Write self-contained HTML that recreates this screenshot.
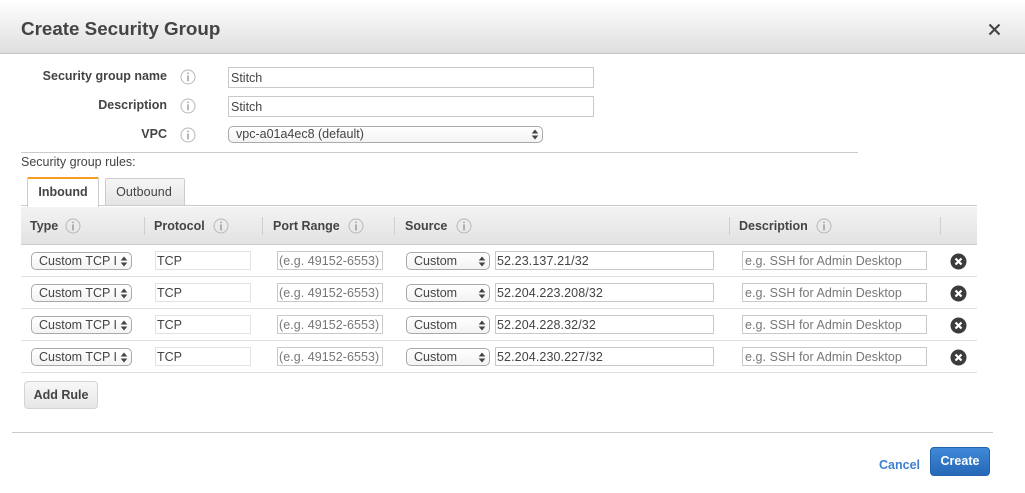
<!DOCTYPE html>
<html>
<head>
<meta charset="utf-8">
<style>
html,body{margin:0;padding:0;background:#fff}
body{width:1025px;height:493px;position:relative;overflow:hidden;font-family:"Liberation Sans",sans-serif;color:#444;font-size:12.5px;filter:blur(.3px)}
.a{position:absolute;white-space:nowrap}
.head{left:0;top:0;width:1025px;height:53px;background:linear-gradient(#fff,#dedede);border-bottom:1px solid #c6c6c6}
.title{left:21px;top:17px;font-size:18.8px;line-height:24px;font-weight:bold;color:#444}
.lab{width:146px;left:21px;text-align:right;font-weight:bold;font-size:12.5px;line-height:16px;color:#444}
.inp{box-sizing:border-box;border:1px solid #c9c9c9;background:#fff;font-size:12.5px;line-height:18px;padding-left:1px;color:#444;overflow:hidden}
.ip{letter-spacing:.1px}
.ph{color:#777;letter-spacing:.05px}
.lt{border-color:#e2e2e2}
.sel{box-sizing:border-box;height:18px;border:1px solid #aaa;border-radius:5px;background:linear-gradient(#fff,#f3f3f3);font-size:12.5px;line-height:16px;padding-left:7px;color:#444;overflow:hidden}
.sel svg{position:absolute;right:3px;top:3px}
.hr{height:1px;background:#cbcbcb}
.rl{left:21px;width:956px;height:1px;background:#dedede}
.th{font-weight:bold;font-size:12.5px;line-height:16px;color:#444;top:218px}
.dv{width:1px;height:18px;top:217px;background:#d0d0d0}
</style>
</head>
<body>
<div class="a head"></div>
<div class="a title">Create Security Group</div>
<svg class="a" style="left:988px;top:23px" width="13" height="13" viewBox="0 0 13 13"><path d="M1.5 1.5L11.5 11.5M11.5 1.5L1.5 11.5" stroke="#444" stroke-width="2.1" fill="none"/></svg>

<div class="a lab" style="top:68px">Security group name</div>
<div class="a lab" style="top:97px">Description</div>
<div class="a lab" style="top:126px">VPC</div>

<svg width="0" height="0" style="position:absolute"><defs>
<g id="i"><circle cx="8" cy="8" r="7" fill="none" stroke="#b8b8b8" stroke-width="1"/><rect x="7.4" y="6.4" width="1.2" height="6" fill="#888"/><rect x="7.4" y="3.6" width="1.2" height="1.5" fill="#888"/></g>
<g id="ar"><path d="M4 0.5L7.3 4.5H0.7Z M0.7 6.5H7.3L4 10.5Z" fill="#444"/></g>
<g id="x"><circle cx="8.5" cy="8.5" r="8" fill="#3c3c3c"/><path d="M5.5 5.5L11.5 11.5M11.5 5.5L5.5 11.5" stroke="#fff" stroke-width="2.2"/></g>
</defs></svg>

<svg class="a" style="left:180px;top:69px" width="16" height="16"><use href="#i"/></svg>
<svg class="a" style="left:180px;top:98px" width="16" height="16"><use href="#i"/></svg>
<svg class="a" style="left:180px;top:127px" width="16" height="16"><use href="#i"/></svg>

<div class="a inp" style="left:228px;top:67px;width:366px;height:21px;line-height:20px;padding-left:2px">Stitch</div>
<div class="a inp" style="left:228px;top:96px;width:366px;height:21px;line-height:20px;padding-left:2px">Stitch</div>
<div class="a sel" style="left:228px;top:126px;width:315px;height:17px;line-height:14px">vpc-a01a4ec8 (default)<svg width="8" height="11" style="right:3px;top:2px"><use href="#ar"/></svg></div>

<div class="a hr" style="left:21px;top:152px;width:837px"></div>
<div class="a" style="left:21px;top:154px;font-size:12.5px;line-height:16px">Security group rules:</div>

<div class="a" style="left:21px;top:205px;width:956px;height:1px;background:#ccc"></div>
<div class="a" style="left:105px;top:178px;width:80px;height:27px;box-sizing:border-box;border:1px solid #ccc;border-bottom:0;border-radius:2px 2px 0 0;background:linear-gradient(#f6f6f6,#e4e4e4);text-align:center;line-height:26px;color:#444;letter-spacing:.12px;padding-right:2px">Outbound</div>
<div class="a" style="left:27px;top:177px;width:72px;height:30px;box-sizing:border-box;border:1px solid #ccc;border-top:2px solid #f59a23;border-bottom:0;border-radius:2px 2px 0 0;background:#fff;text-align:center;line-height:27px;font-weight:bold;color:#444">Inbound</div>

<div class="a" style="left:21px;top:207px;width:956px;height:37px;background:linear-gradient(#f3f3f3,#e2e2e2);border-bottom:1px solid #ccc"></div>
<div class="a" style="left:99px;top:206px;width:878px;height:1px;background:#fff"></div>
<div class="a th" style="left:30px">Type</div>
<svg class="a" style="left:65px;top:218px" width="16" height="16"><use href="#i"/></svg>
<div class="a dv" style="left:144px"></div>
<div class="a th" style="left:154px">Protocol</div>
<svg class="a" style="left:213px;top:218px" width="16" height="16"><use href="#i"/></svg>
<div class="a dv" style="left:262px"></div>
<div class="a th" style="left:273px">Port Range</div>
<svg class="a" style="left:348px;top:218px" width="16" height="16"><use href="#i"/></svg>
<div class="a dv" style="left:394px"></div>
<div class="a th" style="left:405px">Source</div>
<svg class="a" style="left:456px;top:218px" width="16" height="16"><use href="#i"/></svg>
<div class="a dv" style="left:729px"></div>
<div class="a th" style="left:739px">Description</div>
<svg class="a" style="left:816px;top:218px" width="16" height="16"><use href="#i"/></svg>
<div class="a dv" style="left:940px"></div>

<!-- Row 1 -->
<div class="a sel" style="left:31px;top:252px;width:101px">Custom TCP I<svg width="8" height="11"><use href="#ar"/></svg></div>
<div class="a inp lt" style="left:155px;top:251px;width:96px;height:19px">TCP</div>
<div class="a inp ph" style="left:277px;top:251px;width:106px;height:19px">(e.g. 49152-6553)</div>
<div class="a sel" style="left:406px;top:252px;width:84px">Custom<svg width="8" height="11"><use href="#ar"/></svg></div>
<div class="a inp ip" style="left:495px;top:251px;width:219px;height:19px">52.23.137.21/32</div>
<div class="a inp ph" style="left:742px;top:251px;width:185px;height:19px;padding-left:2px">e.g. SSH for Admin Desktop</div>
<svg class="a" style="left:950px;top:253px" width="17" height="17"><use href="#x"/></svg>
<div class="a rl" style="top:276px"></div>

<!-- Row 2 -->
<div class="a sel" style="left:31px;top:284px;width:101px">Custom TCP I<svg width="8" height="11"><use href="#ar"/></svg></div>
<div class="a inp lt" style="left:155px;top:283px;width:96px;height:19px">TCP</div>
<div class="a inp ph" style="left:277px;top:283px;width:106px;height:19px">(e.g. 49152-6553)</div>
<div class="a sel" style="left:406px;top:284px;width:84px">Custom<svg width="8" height="11"><use href="#ar"/></svg></div>
<div class="a inp ip" style="left:495px;top:283px;width:219px;height:19px">52.204.223.208/32</div>
<div class="a inp ph" style="left:742px;top:283px;width:185px;height:19px;padding-left:2px">e.g. SSH for Admin Desktop</div>
<svg class="a" style="left:950px;top:285px" width="17" height="17"><use href="#x"/></svg>
<div class="a rl" style="top:308px"></div>

<!-- Row 3 -->
<div class="a sel" style="left:31px;top:316px;width:101px">Custom TCP I<svg width="8" height="11"><use href="#ar"/></svg></div>
<div class="a inp lt" style="left:155px;top:315px;width:96px;height:19px">TCP</div>
<div class="a inp ph" style="left:277px;top:315px;width:106px;height:19px">(e.g. 49152-6553)</div>
<div class="a sel" style="left:406px;top:316px;width:84px">Custom<svg width="8" height="11"><use href="#ar"/></svg></div>
<div class="a inp ip" style="left:495px;top:315px;width:219px;height:19px">52.204.228.32/32</div>
<div class="a inp ph" style="left:742px;top:315px;width:185px;height:19px;padding-left:2px">e.g. SSH for Admin Desktop</div>
<svg class="a" style="left:950px;top:317px" width="17" height="17"><use href="#x"/></svg>
<div class="a rl" style="top:340px"></div>

<!-- Row 4 -->
<div class="a sel" style="left:31px;top:348px;width:101px">Custom TCP I<svg width="8" height="11"><use href="#ar"/></svg></div>
<div class="a inp lt" style="left:155px;top:347px;width:96px;height:19px">TCP</div>
<div class="a inp ph" style="left:277px;top:347px;width:106px;height:19px">(e.g. 49152-6553)</div>
<div class="a sel" style="left:406px;top:348px;width:84px">Custom<svg width="8" height="11"><use href="#ar"/></svg></div>
<div class="a inp ip" style="left:495px;top:347px;width:219px;height:19px">52.204.230.227/32</div>
<div class="a inp ph" style="left:742px;top:347px;width:185px;height:19px;padding-left:2px">e.g. SSH for Admin Desktop</div>
<svg class="a" style="left:950px;top:349px" width="17" height="17"><use href="#x"/></svg>
<div class="a rl" style="top:372px"></div>

<div class="a" style="left:24px;top:381px;width:74px;height:28px;box-sizing:border-box;border:1px solid #d4d4d4;border-radius:4px;background:linear-gradient(#f7f7f7,#e6e6e6);text-align:center;line-height:26px;font-weight:bold;color:#444">Add Rule</div>

<div class="a hr" style="left:12px;top:432px;width:981px"></div>
<div class="a" style="left:879px;top:457px;font-size:12.5px;line-height:16px;font-weight:bold;color:#3f7fd0">Cancel</div>
<div class="a" style="left:930px;top:447px;width:60px;height:29px;box-sizing:border-box;border:1px solid #2263ad;border-radius:4px;background:linear-gradient(#3f88d8,#2468b6);text-align:center;line-height:27px;font-weight:bold;color:#fff">Create</div>
</body>
</html>
